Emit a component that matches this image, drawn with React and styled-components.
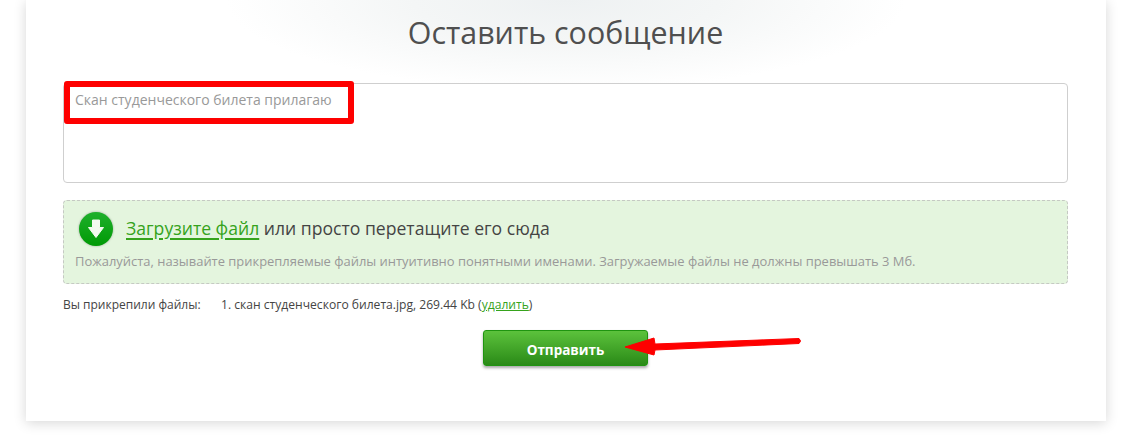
import React from 'react';
import styled, { createGlobalStyle } from 'styled-components';

const Global = createGlobalStyle`
  html, body {
    margin: 0;
    height: 440px;
    overflow: hidden;
    background: #fff;
  }
  * { box-sizing: border-box; }
`;

const Page = styled.div`
  padding: 0 31px 0 26px;
  font-family: "Open Sans", sans-serif;
`;

/* white sheet with the soft grey glow behind the title */
const Card = styled.section`
  position: relative;
  height: 421px;
  padding: 0 38px 0 37px;
  background:
    radial-gradient(ellipse 340px 90px at 50% 0, #eef1f2 0%, #f4f6f6 45%, #ffffff 100%);
  box-shadow: 0 2px 12px rgba(0, 0, 0, 0.16);
`;

const Title = styled.h2`
  margin: 0;
  padding-top: 11px;
  height: 83px;
  font-size: 30.4px;
  line-height: 43px;
  font-weight: 400;
  text-align: center;
  color: #4f4f4f;
`;

const MessageBox = styled.div`
  height: 100px;
  padding: 6px 11px;
  border: 1px solid #cfcfcf;
  border-radius: 4px;
  background: #fff;
  font-size: 14px;
  line-height: 20px;
  color: #999;
`;

const DropZone = styled.div`
  margin-top: 17px;
  height: 84px;
  padding: 9px 11px;
  border: 1px dashed #c5c9c3;
  border-radius: 4px;
  background: #e4f5de;
`;

const DropHead = styled.div`
  display: flex;
  align-items: center;
  gap: 11px;
  height: 38px;
  font-size: 17.6px;
  color: #444;
`;

const DropTitle = styled.span`
  padding-bottom: 3px;
`;

const UploadLink = styled.a`
  color: #36a31c;
  text-decoration: underline;
  text-decoration-thickness: 1.5px;
  text-underline-offset: 3px;
`;

const UploadBadge = styled.span`
  display: flex;
  flex: none;
  width: 38px;
  height: 38px;
  margin-left: 2px;
  filter: drop-shadow(0 0 1px rgba(0, 0, 0, 0.3));
`;

const DropHint = styled.p`
  margin: 4px 0 0;
  font-size: 12.95px;
  line-height: 18px;
  color: #999;
`;

const FilesRow = styled.div`
  display: flex;
  margin-top: 12px;
  font-size: 12px;
  line-height: 17px;
  color: #444;
`;

const FilesLabel = styled.span`
  width: 158px;
`;

const FileInfo = styled.span`
  font-size: 12.1px;
`;

const RemoveLink = styled.a`
  color: #36a31c;
  text-decoration: underline;
`;

const SendRow = styled.div`
  display: flex;
  justify-content: center;
  margin: 17px 0 0;
`;

const SendButton = styled.button`
  width: 165px;
  height: 36px;
  padding: 3px 0 0;
  border: 1px solid #1f9410;
  border-radius: 3px;
  background: linear-gradient(#5cc23c, #2a8a17);
  box-shadow: 0 2px 3px rgba(0, 0, 0, 0.35);
  font-family: "Open Sans", sans-serif;
  font-size: 13.5px;
  font-weight: 700;
  color: #fff;
`;

/* red marks drawn over the screenshot */
const Highlight = styled.div`
  position: absolute;
  left: 38px;
  top: 81px;
  width: 290px;
  height: 43px;
  border: 6px solid #fe0000;
  border-radius: 3px;
`;

const ArrowMark = styled.svg`
  position: absolute;
  left: 596px;
  top: 333px;
`;

const DownIcon = () => (
  <svg width="38" height="38" viewBox="0 0 38 38" aria-hidden="true">
    <defs>
      <linearGradient id="badge" x1="0" y1="0" x2="0" y2="1">
        <stop offset="0" stopColor="#1fb02c" />
        <stop offset="1" stopColor="#009a05" />
      </linearGradient>
    </defs>
    <circle cx="19" cy="19" r="17" fill="url(#badge)" />
    <path
      d="M15.500 10h7v7.500h4L19 27.500 11.500 17.500h4z"
      fill="#f2faef"
      stroke="#f2faef"
      strokeLinejoin="round"
    />
  </svg>
);

const App = () => (
  <Page>
    <Global />
    <Card>
      <Title>Оставить сообщение</Title>
      <MessageBox>Скан студенческого билета прилагаю</MessageBox>
      <DropZone>
        <DropHead>
          <UploadBadge>
            <DownIcon />
          </UploadBadge>
          <DropTitle>
            <UploadLink>Загрузите файл</UploadLink> или просто перетащите его сюда
          </DropTitle>
        </DropHead>
        <DropHint>
          Пожалуйста, называйте прикрепляемые файлы интуитивно понятными именами. Загружаемые файлы
          не должны превышать 3 Мб.
        </DropHint>
      </DropZone>
      <FilesRow>
        <FilesLabel>Вы прикрепили файлы:</FilesLabel>
        <FileInfo>
          1. скан студенческого билета.jpg, 269.44 Kb (<RemoveLink>удалить</RemoveLink>)
        </FileInfo>
      </FilesRow>
      <SendRow>
        <SendButton>Отправить</SendButton>
      </SendRow>
      <Highlight />
      <ArrowMark width="184" height="30" viewBox="0 0 184 30" aria-hidden="true">
        <path
          d="M3 14L32 5 L33 11 L177 5.500 Q180 8 177 10.500 L33 17 L32 22z"
          fill="#fe0000"
          stroke="#fe0000"
          strokeLinejoin="round"
        />
      </ArrowMark>
    </Card>
  </Page>
);

export default App;
